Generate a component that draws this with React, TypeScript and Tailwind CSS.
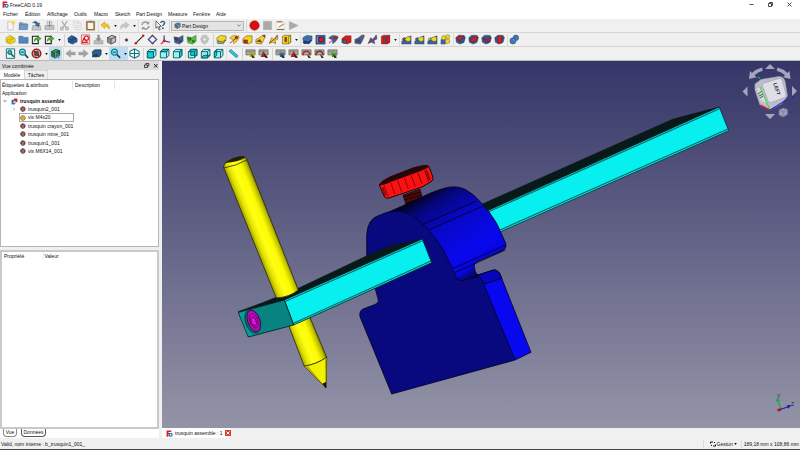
import React from "react";

type Glyph = { k: string; a?: string; b?: string };

const BLUE = "#3465a4";
const NAVY = "#1d3f73";
const YEL = "#f0d818";
const RED = "#dc1a1a";
const TEAL = "#18b8c0";

function Cube({ a, b, c }: { a: string; b: string; c: string }) {
  return (
    <g stroke="#222" strokeWidth=".5" strokeLinejoin="round">
      <path d="M1.5 4 6.5 1.5 10.5 3v5.5L5.5 11 1.5 9z" fill={b} />
      <path d="M1.5 4 6.5 1.5 10.5 3 5.7 5.5z" fill={a} />
      <path d="M5.7 5.5 10.5 3v5.5L5.6 11z" fill={c} />
    </g>
  );
}

function Drawing({ k, a = BLUE, b = NAVY }: Glyph) {
  switch (k) {
    case "new":
      return <g><path d="M3 2h6v9H3z" fill="#f4f4f4" stroke="#aaa" strokeWidth=".6" /><circle cx="9" cy="3" r="2.2" fill="#f3dc4a" /></g>;
    case "open":
      return <g><path d="M1 2.500h4l1 1h4v6H1z" fill="#8a939c" /><path d="M2.200 5H11l-.8 5.500H1z" fill="#6b9bd0" stroke="#48719f" strokeWidth=".5" /></g>;
    case "save":
      return <g><path d="M2 6h8l1 5H1z" fill="#c3c8cc" stroke="#777" strokeWidth=".5" /><path d="M1.500 3Q5-.5 8 3.500l1.500-.5L8.500 7.500 4.500 5.500 6 4.700Q4 2.500 1.500 3z" fill={a} stroke="#345" strokeWidth=".3" /></g>;
    case "print":
      return <g><path d="M3.500 1.500h5V6h-5z" fill="#ddd" stroke="#999" strokeWidth=".6" /><path d="M1 6h10v4.500H1z" fill="#c0c0c0" stroke="#8c8c8c" strokeWidth=".5" /><path d="M6 2v5M4.500 5.500 6 7l1.500-1.500" stroke="#888" fill="none" /></g>;
    case "cut":
      return <g fill="none" stroke="#aaa" strokeWidth="1.200"><path d="M3 1l4.500 7M9 1 4.500 8" /><circle cx="3.200" cy="9.300" r="1.500" /><circle cx="8.800" cy="9.300" r="1.500" /></g>;
    case "copy":
      return <g fill="#f2f2f2" stroke="#c5c5c5" strokeWidth=".6"><path d="M2 1.500h5.500v7H2z" /><path d="M4.500 3.500H10v7H4.500z" /><path d="M5.500 6H9M5.500 8H9" /></g>;
    case "paste":
      return <g><path d="M1.500 1.500h9V11h-9z" fill="#a77b35" stroke="#6b4b18" strokeWidth=".5" /><path d="M3 3h6v6.800H3z" fill="#f5f5f5" /><path d="M4.300.8h3.400v2H4.300z" fill="#888" /></g>;
    case "undo":
      return <path d="M1 5.500 5 2v2c3.500 0 6 1.600 5 6-.8-2-2.500-3-5-2.800v2z" fill={a} stroke={b} strokeWidth=".5" />;
    case "redo":
      return <path d="M11 5.500 7 2v2C3.500 4 1 5.600 2 10c.8-2 2.500-3 5-2.800v2z" fill="#c6c6c6" stroke="#a5a5a5" strokeWidth=".4" />;
    case "refresh":
      return <g fill="none" stroke="#999" strokeWidth="1.600"><path d="M2 5.500A4 4 0 0 1 9 3.500M10 6.500A4 4 0 0 1 3 8.500" /><path d="M10 1v3.500H6.500zM2 11V7.500h3.500z" fill="#999" stroke="none" /></g>;
    case "help":
      return <g><path d="M1 1v8l2-1.700L4.500 11l1.200-.6L4.400 7H7z" fill="#f6f6f6" stroke="#222" strokeWidth=".7" /><path d="M6.300 3.300C6.500.8 10.800 1 10.500 3.500c-.2 1.300-1.900 1.500-1.900 3" fill="none" stroke="#36597c" strokeWidth="1.500" /><circle cx="8.600" cy="9" r="1" fill="#36597c" /></g>;
    case "rec":
      return <circle cx="6" cy="6" r="5.200" fill="#d90f0f" stroke="#a80808" strokeWidth=".5" />;
    case "stop":
      return <path d="M1.500 1.500h9v9h-9z" fill="#aaa" stroke="#999" strokeWidth=".4" />;
    case "macro":
      return <g><path d="M1.500 2h9v8.500h-9z" fill="#f8f8f3" stroke="#c9c9c9" strokeWidth=".5" /><path d="M2 2h6M2 10.300h8" stroke="#555" /><path d="M4 8 10 4" stroke="#d49a28" strokeWidth="1.400" /></g>;
    case "play":
      return <path d="M1.500 1.500 11 6l-9.500 4.500z" fill="#aaa" stroke="#999" strokeWidth=".4" />;
    case "cube":
      return <Cube a={a} b={b} c={a} />;
    case "part":
      return <g stroke={b} strokeWidth=".6" fill={a}><path d="M1 4.500 5 1.500l3 1.500 3 2v3.500l-5 2.500-4.500-2z" /><circle cx="4" cy="7.500" r="1.700" /><circle cx="7.500" cy="4.800" r="1.500" /></g>;
    case "folder":
      return <path d="M1 2.500h4.200l1 1.200H11V10H1z" fill="#5187c2" stroke="#37618f" strokeWidth=".6" />;
    case "link":
      return <g><path d="M1.500 2.500h6.500v8H1.500z" fill="#f0f0f0" stroke="#222" strokeWidth="1.100" /><path d="M3.500 8C3.500 5 5 4 7 4V2l4 3-4 3V6C5.500 6 5 6.500 3.500 8z" fill="#4db62a" stroke="#1c6214" strokeWidth=".5" /></g>;
    case "sketch":
      return <g><path d="M1.500 1h9v10h-9z" fill="#f7e3e3" stroke="#d04a4a" strokeWidth=".8" /><circle cx="7" cy="4.500" r="2.300" fill="none" stroke={RED} strokeWidth="1.200" /><path d="M2.500 9.500 4 5l4 4z" fill="none" stroke={RED} strokeWidth="1.200" /></g>;
    case "attach":
      return <g fill="#bbb" stroke="#8a8a8a" strokeWidth=".4"><path d="M1 7h10v4H1z" /><path d="M5 1h2v4h2L6 8 3 5h2z" fill="#888" /></g>;
    case "dot":
      return <circle cx="6" cy="6.500" r="1.400" fill="#c02030" stroke="#2a3c8c" strokeWidth=".8" />;
    case "line":
      return <g><path d="M2 10 10 2" stroke="#222" strokeWidth="1.100" /><circle cx="2" cy="10" r="1.400" fill={RED} /><circle cx="10" cy="2" r="1.400" fill={RED} /></g>;
    case "plane":
      return <g><path d="M6 1.500 10.500 6 6 10.500 1.500 6z" fill="#eef1fa" stroke="#27458a" strokeWidth="1.300" /><circle cx="6" cy="1.800" r="1" fill={RED} /><circle cx="6" cy="10.300" r="1" fill={RED} /></g>;
    case "axes":
      return <g strokeWidth="1.300"><path d="M4.500 7.500V1.500" stroke="#27458a" /><path d="M4.500 7.500 1 11" stroke={RED} /><path d="M4.500 7.500 11 9" stroke="#27458a" /><circle cx="4.500" cy="7.500" r="1.500" fill={RED} /></g>;
    case "bind":
      return <g stroke="#222" strokeWidth=".4"><path d="M1 3 6 4l5-2.500V8L7 11 2 9.500z" fill={a} /><circle cx="4" cy="5.500" r="1.700" fill={b} /><circle cx="8" cy="8" r="1.200" fill={b} /></g>;
    case "clone":
      return <g stroke="#9a9a9a" strokeWidth=".6" fill="#ccc"><path d="M2 5 4 1.500h4L10.500 5 9 9l-3 2-3-2z" /><circle cx="6" cy="6" r="2" fill="#eee" /></g>;
    case "pad":
      return <g stroke="#333" strokeWidth=".5"><path d="M1 8.500 4 6.500h7L8 10.500H2z" fill={b} /><path d="M1 4 5 1.500l6 .8V6L7 8.500 1 7z" fill={a} /></g>;
    case "revolve":
      return <g stroke="#333" strokeWidth=".4"><path d="M.8 4.500C3 .8 9 .8 11.200 4L8 8.500 5 10.500V6.500z" fill={a} /><path d="M1 10 11 2" stroke={b} strokeWidth="1" /><circle cx="8" cy="4" r="1.500" fill={b} /></g>;
    case "loft":
      return <g stroke="#333" strokeWidth=".5"><path d="M1 5 5 2h6v7L7 10.800 1 9.500z" fill={a} /><path d="M2 6.500h4V10H2z" fill={b} /></g>;
    case "sweep":
      return <g stroke="#333" strokeWidth=".5"><path d="M1 6 5 4 8 1.500 10.500 4 9 7.500 7 11 1 10z" fill={a} /><path d="M2 8 5.500 6 7 9z" fill={b} /><path d="M8 1.500 11 1v3" fill={b} /></g>;
    case "helix":
      return <g><path d="M1.500 10 4 4 6.500 6 10 1l.8 4.500L7.500 7l1 3.500L5 9z" fill={a} stroke="#333" strokeWidth=".5" /><path d="M1 10.500 11 2" stroke={b} strokeWidth=".9" /></g>;
    case "prim":
      return <g stroke="#333" strokeWidth=".5"><path d="M1.500 2.500 4 1.300h6.500V9L8 10.800H1.500z" fill={a} /><path d="M8 2.800 10.500 1.500V9L8 10.500z" fill={a} /><path d="M4.200 3.500h1.800v5H4.200z" fill={b} /></g>;
    case "hole":
      return <g><path d="M1 1.500h10V11H1z" fill="#2d5c9f" stroke="#172e5b" strokeWidth=".6" /><circle cx="6.500" cy="6" r="2.800" fill={RED} stroke="#300" strokeWidth=".5" /><path d="M2.500 2.500v7" stroke="#7ba4d8" /></g>;
    case "pattern":
      return <g stroke="#333" strokeWidth=".4"><path d="M.8 8 4 5l7-3v9H.8z" fill={BLUE} /><path d="M4 6 6.500 3.200h4V7L7.500 8.500z" fill={YEL} /><path d="M1 5.500 4 3.500v3.500z" fill={a} /></g>;
    case "multi":
      return <g stroke="#444" strokeWidth=".4"><path d="M1 6h5v5H1z" fill={BLUE} /><circle cx="4" cy="4" r="2.300" fill={YEL} /><circle cx="8.500" cy="3" r="2.300" fill={YEL} /><circle cx="8.300" cy="8" r="2.500" fill={YEL} /></g>;
    case "fillet":
      return <g stroke="#222" strokeWidth=".4"><path d="M.8 4 4 1.300l6 .2L11.300 4l-1.500 5.200L5.500 11 1.500 9z" fill="#2b5797" /><path d={a === "1" ? "M2 4.500 5 2l5 1L6 6v3z" : a === "2" ? "M2 7 7 2l4 2-5 5z" : a === "3" ? "M2 4.500 6 6l4-2v4L7 7v2.500L5 8z" : "M4 2.500 8.500 2v7.500L4 10z"} fill={RED} /></g>;
    case "bool":
      return <g fill="#4178b8" stroke="#1d416f" strokeWidth=".6"><circle cx="7.500" cy="4.200" r="3" /><circle cx="4.300" cy="7.500" r="3.300" /><path d="M4.500 5.500 7 7.500" stroke="#9dc1e8" /></g>;
    case "fitall":
      return <g><path d="M1.500 1h9v10.300h-9z" fill="#eaf6f4" stroke="#126a6a" strokeWidth="1" /><circle cx="5.200" cy="4.800" r="2.300" fill={TEAL} stroke="#0c4a50" strokeWidth=".8" /><path d="M6.800 6.500 9.500 9.500" stroke="#0c4a50" strokeWidth="1.500" /></g>;
    case "zoom":
      return <g><path d="M7 6.500 10.500 10.200" stroke="#145" strokeWidth="1.800" strokeLinecap="round" /><circle cx="4.800" cy="4.500" r="3.200" fill="#8fe4e8" stroke="#0c8590" strokeWidth="1.400" /><path d="M3 4.500h3.600" stroke="#137" /></g>;
    case "nodraw":
      return <g><path d="M3 4 6.500 2.500 9 4v4L5.500 9.500 3 8z" fill="#286b71" /><circle cx="6" cy="6" r="4.600" fill="none" stroke="#b41414" strokeWidth="1.700" /><path d="M3 3l6 6" stroke="#b41414" strokeWidth="1.500" /></g>;
    case "bbox":
      return <g><Cube a="#2ca04a" b="#167c36" c="#21663b" /><path d="m6 5 5 4-2 .2L10.200 11 9 11.500 8 9.500l-2 1z" fill="#315b93" stroke="#dfefff" strokeWidth=".4" /></g>;
    case "back":
      return <path d="M.8 6 6 1.800v2.700h5.200v3H6v2.700z" fill="#a2a2a2" stroke="#888" strokeWidth=".4" />;
    case "fwd":
      return <path d="M11.200 6 6 1.800v2.700H.8v3H6v2.700z" fill="#a2a2a2" stroke="#888" strokeWidth=".4" />;
    case "linkcube":
      return <g><path d="M1.500 4 4 2h7v5L9 9.500H2z" fill="#2b6293" stroke="#123" strokeWidth=".7" /><path d="M1 10.500C1 8 3 7 5 7V5.500L8 8l-3 2.500V9C3 9 2 9.500 1 10.500z" fill="#173d68" /></g>;
    case "iso":
      return <g fill="#e8fbfb" stroke="#127079" strokeWidth="1.100"><path d="M6 1 11 3.500v5L6 11 1 8.500v-5z" /><path d="M1 6h10M6 1v10" /></g>;
    case "face":
      return <g stroke="#085f68" strokeWidth="1" strokeLinejoin="round"><path d="M1.500 4 4 1.500h6.800V8L8.200 10.800H1.500z" fill="#9df1f3" /><path d={a === "1" ? "M1.500 4h6.700v6.800H1.500z" : a === "2" ? "M1.500 4 4 1.500h6.800L8.200 4z" : a === "3" ? "M8.200 4 10.800 1.500V8L8.200 10.800z" : a === "4" ? "M4 1.500h6.800V8H4z" : a === "5" ? "M1.500 10.800 4 8h6.800l-2.600 2.800z" : "M1.500 4 4 1.500V8l-2.500 2.800z"} fill="#12cdd6" /><path d="M1.500 4h6.700v6.800M8.200 4l2.600-2.500" fill="none" /></g>;
    case "ruler":
      return <path d="M1 3.500 3 1.500l8 7L9 10.500z" fill="#27cbd6" stroke="#0b6f7a" strokeWidth=".7" />;
    case "meas":
      return <g><path d="M1 2h10v5.500H1z" fill="#a9ab9c" stroke="#555" strokeWidth=".7" /><path d="M2 4h7" stroke="#333" strokeWidth=".6" strokeDasharray="1 .7" /><path d={b === "1" ? "M4 9 6 5l3 4z" : b === "2" ? "M2 8C3 2 9 2 10 8" : "M5.500 6h4v3H6z"} fill={b === "2" ? "none" : a} stroke={a} strokeWidth="1.400" /><path d="m6.500 6.500 4.500 4-3 .5z" fill="#222" /></g>;
    case "logo":
      return <g><path d="M1 1h8v2.500H4.200V5H7v2H4.200v4.500H1z" fill="#d42026" /><circle cx="8" cy="8" r="2.500" fill="#fff" stroke="#2563a8" strokeWidth="2" /></g>;
    default:
      return null;
  }
}

function Icon({ size = "size-[11px]", ...g }: Glyph & { size?: string }) {
  return <svg viewBox="0 0 12 12" className={`${size} shrink-0`} aria-hidden="true"><Drawing {...g} /></svg>;
}

// [label, kind, colour a, colour b]; "|" narrow separator, "||" wide separator, "v" drop-down arrow
type Item = string | [string, string, string?, string?];

function Tool({ item }: { item: Item }) {
  if (item === "|") return <span className="flex h-3 w-0.5 shrink-0 justify-center"><i className="w-px bg-[#dcdcdc]" /></span>;
  if (item === "||") return <span className="flex h-3 w-1 shrink-0 justify-center"><i className="w-px bg-[#d4d4d4]" /></span>;
  if (item === "v" || item === "V")
    return (
      <button aria-label="Plus d'options" className={`flex h-[13px] w-1.5 shrink-0 items-center justify-center ${item === "V" ? "bg-[#bcdcf4]" : ""}`}>
        <svg viewBox="0 0 4 3" className="h-[2px] w-[3px]"><path d="M0 0h4L2 3z" fill="#111" /></svg>
      </button>
    );
  const [label, k, a, b] = item as [string, string, string?, string?];
  const on = k === "bbox" || label === "Zoom lié";
  return (
    <button aria-label={label} title={label} className={`flex h-[13px] w-[13px] shrink-0 items-center justify-center ${on ? "bg-[#bcdcf4]" : ""}`}>
      <Icon k={k} a={a} b={b} />
    </button>
  );
}

const fileTools: Item[] = [
  ["Nouveau", "new"], ["Ouvrir", "open"], ["Enregistrer", "save"], ["Imprimer", "print"], "|",
  ["Couper", "cut"], ["Copier", "copy"], ["Coller", "paste"], "|",
  ["Annuler", "undo", "#f1c71d", "#b38d08"], "v", ["Rétablir", "redo"], "v", "|",
  ["Rafraîchir", "refresh"], "|", ["Qu'est-ce que c'est ?", "help"], "||",
];
const macroTools: Item[] = [["Enregistrer la macro", "rec"], ["Arrêter", "stop"], ["Macros", "macro"], ["Exécuter", "play"]];
const partTools: Item[] = [
  ["Créer une pièce", "part", YEL, "#a48a08"], ["Créer un groupe", "folder"], ["Créer un lien", "link"], ["Actions de lien", "link"], "v", "||",
  ["Créer un corps", "part", "#2b5c9c", "#12305c"], ["Créer une esquisse", "sketch"], ["Attacher l'esquisse", "attach"], ["Valider l'esquisse", "cube", "#bbb", "#8b8b8b"], "|",
  ["Point", "dot"], ["Ligne", "line"], ["Plan", "plane"], ["Repère local", "axes"], ["Forme liée", "bind", BLUE, "#7c3150"], ["Sous-forme liée", "bind", "#4fc936", "#2b8c18"], ["Clone", "clone"], "||",
  ["Protrusion", "pad", YEL, "#9d9f88"], ["Révolution", "revolve", YEL, RED], ["Lissage additif", "loft", YEL, RED], ["Balayage additif", "sweep", YEL, RED], ["Hélice additive", "helix", YEL, RED], ["Primitive additive", "prim", YEL, RED], "v", "|",
  ["Cavité", "pad", "#3b6fb4", "#173b76"], ["Perçage", "hole"], ["Rainure", "revolve", BLUE, RED], ["Lissage soustractif", "loft", RED, BLUE], ["Balayage soustractif", "sweep", BLUE, RED], ["Hélice soustractive", "helix", BLUE, RED], ["Primitive soustractive", "prim", RED, BLUE], "v", "|",
  ["Symétrie", "pattern", RED], ["Répétition linéaire", "pattern", BLUE], ["Répétition circulaire", "pattern", YEL], ["Transformation multiple", "multi"], "|",
  ["Congé", "fillet", "1"], ["Chanfrein", "fillet", "2"], ["Dépouille", "fillet", "3"], ["Coque", "fillet", "4"], "|",
  ["Opération booléenne", "bool"],
];
const viewTools: Item[] = [
  ["Tout afficher", "fitall"], ["Afficher la sélection", "zoom"], ["Style de représentation", "nodraw"], "v", ["Boîte englobante", "bbox"], "|",
  ["Précédent", "back"], ["Suivant", "fwd"], ["Aller à l'objet lié", "linkcube"], "v",
  ["Zoom lié", "zoom"], "V", ["Isométrique", "iso"], "||",
  ["Face", "face", "1"], ["Dessus", "face", "2"], ["Droite", "face", "3"], "|",
  ["Arrière", "face", "4"], ["Dessous", "face", "5"], ["Gauche", "face", "6"], "|", ["Mesurer une distance", "ruler"], "||",
  ["Mesure linéaire", "meas", "#b4a915", "0"], ["Mesure angulaire", "meas", "#a52525", "1"], "||",
  ["Actualiser", "meas", "#3565a0", "0"], ["Effacer", "meas", "#b81c28", "1"], ["Tout basculer", "meas", "#b81c28", "2"], ["Basculer 3D", "meas", "#8f2020", "2"], ["Basculer delta", "meas", "#4c9b20", "0"],
];

const menus: [string, string][] = [
  ["Fichier", "w-[22px]"], ["Édition", "w-[22px]"], ["Affichage", "w-[27px]"], ["Outils", "w-[20px]"], ["Macro", "w-[21px]"],
  ["Sketch", "w-[21px]"], ["Part Design", "w-[32px]"], ["Measure", "w-[25px]"], ["Fenêtre", "w-[23px]"], ["Aide", "w-[16px]"],
];

const parts = ["trusquin2_001", "vis M4x20", "trusquin crayon_001", "trusquin mine_001", "trusquin1_001", "vis M6X14_001"];

function PartDot({ color }: { color: string }) {
  return (
    <svg viewBox="0 0 12 12" className="size-[6px] shrink-0">
      <path d="M1 4 4 1l5 1 2 4-2 4-4 1.500L1 8z" fill={color} stroke="#3a2020" strokeWidth=".7" />
      <path d="M3 4l3 2 3-2M6 6v4" stroke="#c8b9b9" fill="none" />
    </svg>
  );
}

function Scene() {
  const flutes = [0, 1, 2, 3, 4, 5, 6];
  return (
    <svg viewBox="162 61 638 367" preserveAspectRatio="xMidYMid slice" className="block h-full w-full" role="img" aria-label="Vue 3D du trusquin assemblé">
      <defs>
        <linearGradient id="sky" x1="0" y1="0" x2="0" y2="1"><stop offset="0" stopColor="#353568" /><stop offset="1" stopColor="#9494a8" /></linearGradient>
        <linearGradient id="pencil" gradientUnits="userSpaceOnUse" x1="251.700" y1="237" x2="274" y2="228">
          <stop offset="0" stopColor="#a0a000" /><stop offset=".18" stopColor="#e2e200" /><stop offset=".4" stopColor="#ffff14" /><stop offset=".7" stopColor="#fbfb00" /><stop offset=".9" stopColor="#c4c400" /><stop offset="1" stopColor="#8a8a00" />
        </linearGradient>
        <linearGradient id="round" gradientUnits="userSpaceOnUse" x1="425" y1="195" x2="475" y2="275">
          <stop offset="0" stopColor="#02022c" /><stop offset=".12" stopColor="#06067a" /><stop offset=".4" stopColor="#0808c8" /><stop offset=".75" stopColor="#0808ee" /><stop offset=".9" stopColor="#0606e0" /><stop offset="1" stopColor="#040460" />
        </linearGradient>
      </defs>
      <rect x="162" y="61" width="638" height="367" fill="url(#sky)" />

      <g stroke="#041a1c" strokeWidth=".7" strokeLinejoin="round">
        <path d="M478 206 673.300 119l46-12L487 211z" fill="#071919" />
        <path d="M487 211 719.300 107l9.400 23.700L500 232z" fill="#08efef" />
        <path d="M487 212.500 720 108.600M500 230l228-101" stroke="#0a6667" strokeWidth="1.100" />
      </g>

      <g strokeLinejoin="round">
        <path d="M403 195 420 189l3 11-17 5z" fill="#4d0808" stroke="#1b0303" strokeWidth=".6" />
        <path d="m403 197 18-5m-17 8 18-5m-16 8 17-5" stroke="#160303" strokeWidth=".9" />
        <path d="M379.300 185Q380 182 390 177L413 168Q427 164 429 166.500L432.500 176Q434 179 432 181L422 187 389 198Q386 199 384.500 197z" fill="#fa1212" stroke="#240303" />
        <path d="M379.300 185Q380 182 390 177L413 168Q427 164 429 166.500 428 168.500 414 173.500L392 181.500Q380 186.500 379.300 185z" fill="#2a0505" />
        {flutes.map((i) => (
          <path key={i} d={`M${384 + i * 6.8} ${185.500 - i * 2.500}l4 11`} stroke={i > 4 ? "#5a0505" : "#7c0505"} strokeWidth=".9" />
        ))}
        <path d="M426 170l4 10M382.500 187.500l3 8" stroke="#8b0a0a" strokeWidth="1.800" />
      </g>

      <g stroke="#03031c" strokeWidth=".8" strokeLinejoin="round">
        <path d="M375 218 403 205.700 430 193.300Q446 187 451 187 459 186 465 189.300 474 194 481.700 203.300 490 212 496.700 223.300L505.700 243.300Q507 248 503 250.500L478.300 261Q473 264 474.500 268 475 274 480 276L461.700 281 440 275 400 225z" fill="url(#round)" />
        <path d="M476 275.500 493.300 270Q499 269 501.700 278.300L531 352.300 515 360 478 290z" fill="#0808f0" />
        <path d="M476.700 275.500 493.300 270Q499 269 501.700 278.300L485 284z" fill="#0606b8" />
        <path d="M366.700 256V236Q367 219 379 215.500 391 210 400 211.300 407 212 413.300 216.700 423 223 430 231.700 438 241 443.300 250L451.700 266.700 456 277.300Q458 281 462 281L478.300 276.700Q481 277 483.300 283.300L515 360 391.700 394 360 316.700Q359 311 363 309L375 304.500Q379 303 378.300 300L373 280z" fill="#09097f" />
        <path d="m422.700 224.300 54-23.300m-48.400 29 55-24M453.300 268.300l52-23.300M455 272.500l50.500-22.500" fill="none" />
      </g>

      <g strokeLinejoin="round">
        <path d="M285 316 309 315 326.700 357.300Q317 364 304.300 366.300z" fill="url(#pencil)" stroke="#282800" strokeWidth=".8" />
        <path d="M304.300 366.300Q317 364 326.700 357.300L326 388z" fill="#f2f200" stroke="#282800" strokeWidth=".8" />
        <path d="M304.800 366.500 308 366l17 20.500z" fill="#b4b400" />
        <path d="m325 359 1.500-1-.5 28z" fill="#a0a000" />
        <path d="m322.500 383.500 3.800-1.500-.3 6.500z" fill="#111" />
        <path d="M238.300 311.700 262 303 298 288.500 365 256.700 390 246 422.300 239 285 300z" fill="#071919" stroke="#041a1c" strokeWidth=".7" />
        <path d="m284.300 300 138-61 9.400 23.700-138 62.300z" fill="#08efef" stroke="#041a1c" strokeWidth=".8" />
        <path d="M285 301.500 423 240.500M293 323.500l138-62.500" stroke="#0a6667" strokeWidth="1.100" />
        <path d="m238.300 312.500 46-12.500 9.400 25-45.400 12z" fill="#078382" stroke="#041a1c" strokeWidth=".8" />
        <path d="m239 313 7-2q-6 12 7 24l-4.500 1.300z" fill="#0a9c9c" />
        <g transform="rotate(-20 253.300 321)" fill="none">
          <ellipse cx="252.800" cy="321" rx="7.200" ry="12" fill="#067070" stroke="#043434" strokeWidth=".7" />
          <ellipse cx="253.800" cy="321" rx="6" ry="11" fill="#c008c0" stroke="#3c063c" strokeWidth=".8" />
          <ellipse cx="253.800" cy="321" rx="4" ry="7.500" stroke="#4a054a" strokeWidth=".7" />
          <ellipse cx="253.500" cy="321.500" rx="2.500" ry="4.500" fill="#e310e3" stroke="#3c063c" strokeWidth=".8" />
        </g>
        <path d="M223.500 167Q224 162 235 158 245 155 246.700 159L298.300 290Q290 297 276.300 298z" fill="url(#pencil)" stroke="#282800" strokeWidth=".8" />
        <path d="M225 163Q228 160 235 157.500 243 155 245.500 157.500 238 162 225 163z" fill="#222200" />
        <path d="M223.500 168Q236 166 246.700 160" fill="none" stroke="#282800" strokeWidth=".8" />
      </g>

      <g fill="#a5a5bf">
        <path d="m770 64 5 5h-10zM770 119l5-5h-10zM742.500 91.500l5-5v10zM797 91l-5-5v10z" />
        <path d="M749 79l1-8 2 2q4-4 10-5.500l.8 3.200q-5 1.300-8.300 4.500l2 2zM790.500 79l-1-8-2 2q-4-4-10-5.500l-.8 3.200q5 1.300 8.300 4.500l-2 2z" />
      </g>
      <g strokeLinejoin="round">
        <path d="M755 84 761 79.500 779 76.500Q783 76 785 81L787.500 96 782 103.500 770 110 760 105 755 90z" fill="#bcbccd" stroke="#9c9cb2" strokeWidth=".6" />
        <path d="M764 83 779 78.500Q781 78 782 80L786 94Q786.500 97 784 98L771 102.500Q769 103 768 101L762.500 86Q762 84 764 83z" fill="#dedee6" stroke="#9999ae" strokeWidth=".6" />
        <path d="M756.500 88 761 88 767 103 761 101z" fill="#d6d6e0" />
        <text transform="translate(773 86) rotate(72)" x="4" y="-1" fontSize="5" fontWeight="700" fill="#222" textAnchor="middle" className="font-['Liberation_Sans',sans-serif]">LEFT</text>
        <path d="m758 94 4-3m-3 5 4-2m-3 4 3-2" stroke="#444" strokeWidth=".9" />
        <path d="m760 87 10 23" stroke="#22e822" strokeWidth="1" />
        <path d="m760.500 105 9.500 5" stroke="#e01c1c" strokeWidth="1.200" />
        <path d="m770 110 16-10M792 97.500l2-1.300" stroke="#1515e0" strokeWidth="1" />
        <path d="m758 77 2 1.500" stroke="#19b030" strokeWidth="1.500" />
        <path d="m779 110 4-2 4.500 1.500v5L783 117l-4-2z" fill="#9b9bb4" stroke="#75758f" strokeWidth=".5" />
        <path d="m779 110 4 2v5m0-5 4.500-2.500" fill="none" stroke="#75758f" strokeWidth=".5" />
        <path d="M790 111.500h4l-2 2z" fill="#38385f" />
      </g>

      <g strokeWidth="1.200">
        <path d="m781 409.300-3-8" stroke="#24a548" /><path d="m776 402 1-4.500 3.500 3z" fill="#24a548" />
        <path d="m781 409.300 7-2.500" stroke="#1b1bac" /><path d="m787 405 4.500.3-3.500 3.500z" fill="#1b1bac" />
        <path d="m777.500 410.500 3.500-1.200" stroke="#a41c1c" strokeWidth="2.500" />
        <g fontSize="5" fill="#20202c" stroke="none" className="font-['Liberation_Sans',sans-serif]"><text x="777" y="398">Y</text><text x="791" y="406">Z</text></g>
      </g>
    </svg>
  );
}

export default function App() {
  return (
    <div className="flex h-screen w-full flex-col overflow-hidden border-b border-[#4a4a4a] bg-[#f0f0f0] font-['Liberation_Sans','Noto_Sans',sans-serif] text-[5px] leading-[8px] text-[#111]">
      <header className="shrink-0 bg-white">
        <div className="flex h-[9px] items-center pl-0.5">
          <Icon k="logo" size="size-[7px]" />
          <span className="ml-px">FreeCAD 0.19</span>
          <div className="ml-auto flex gap-3 pr-[7px]">
            <button aria-label="Réduire" className="flex size-[7px] items-center justify-center"><svg viewBox="0 0 7 7" className="size-[7px]"><path d="M1.500 3.500h4" stroke="#222" strokeWidth=".8" /></svg></button>
            <button aria-label="Restaurer"><svg viewBox="0 0 7 7" className="size-[7px]"><path d="M1.500 2.500h3v3h-3zM2.500 2.500v-1h3v3h-1" fill="none" stroke="#222" strokeWidth=".8" /></svg></button>
            <button aria-label="Fermer"><svg viewBox="0 0 7 7" className="size-[7px]"><path d="m1.500 1.500 4 4m0-4-4 4" stroke="#222" strokeWidth=".8" /></svg></button>
          </div>
        </div>
        <nav className="flex h-[10px] items-center pl-[3px]">
          {menus.map(([m, w]) => <button key={m} className={`${w} shrink-0 whitespace-nowrap text-left`}>{m}</button>)}
        </nav>
      </header>

      <div className="flex h-[14px] shrink-0 items-center border-b border-[#d5d5d5] pl-1" role="toolbar" aria-label="Fichier">
        {fileTools.map((t, i) => <Tool key={i} item={t} />)}
        <div className="relative flex h-[10px] w-[73px] shrink-0 items-center border border-[#b5b5b5] bg-[#e3e3e3] pl-0.5">
          <Icon k="cube" a="#7398c5" b="#5c7698" size="size-[7px]" />
          <select aria-label="Atelier" defaultValue="pd" className="h-2 w-full appearance-none bg-transparent pl-px text-[5px] leading-[8px] outline-none"><option value="pd">Part Design</option></select>
          <svg viewBox="0 0 6 4" className="pointer-events-none absolute right-0.5 h-[3px] w-[4px]"><path d="m.5.5 2.500 2.500L5.500.5" stroke="#555" fill="none" /></svg>
        </div>
        <Tool item="||" />
        {macroTools.map((t, i) => <Tool key={i} item={t} />)}
      </div>
      <div className="flex h-[14px] shrink-0 items-center border-b border-[#d5d5d5] pl-1" role="toolbar" aria-label="Conception de pièces">
        {partTools.map((t, i) => <Tool key={i} item={t} />)}
      </div>
      <div className="flex h-[14px] shrink-0 items-center border-b border-[#b9b9b9] pl-1" role="toolbar" aria-label="Vue">
        {viewTools.map((t, i) => <Tool key={i} item={t} />)}
      </div>

      <main className="flex min-h-0 flex-1">
        <aside className="flex w-[159px] shrink-0 flex-col">
          <div className="flex h-[9px] shrink-0 items-center bg-[#dcdcdc] pl-0.5">
            <h2>Vue combinée</h2>
            <button aria-label="Détacher" className="ml-auto mr-0.5"><svg viewBox="0 0 7 7" className="size-[7px]"><path d="M1.500 3h3v2.500h-3zM2.800 3V1.500h3V4H4.500" fill="none" stroke="#222" strokeWidth=".8" /></svg></button>
            <button aria-label="Fermer le panneau"><svg viewBox="0 0 7 7" className="size-[7px]"><path d="m2 2 3.500 3.500m0-3.500L2 5.500" stroke="#222" /></svg></button>
          </div>
          <div className="flex h-[9px] shrink-0" role="tablist">
            <button role="tab" aria-selected="true" className="w-[25px] border-r border-[#d4d4d4] bg-white">Modèle</button>
            <button role="tab" aria-selected="false" className="w-[23px] border-r border-t border-[#d9d9d9]">Tâches</button>
          </div>
          <section className="min-h-0 flex-[168] border border-[#b5b5b5] bg-white">
            <div className="flex h-[10px] items-center"><span className="w-[72px] border-r border-[#e2e2e2] pl-px">Étiquettes &amp; attributs</span><span className="w-[42px] border-r border-[#e2e2e2] pl-0.5">Description</span></div>
            <div className="h-[7px] pl-px leading-[7px]">Application</div>
            <ul className="grid h-[58px] auto-rows-fr">
              <li className="flex items-center pl-0.5 font-bold">
                <svg viewBox="0 0 6 6" className="mr-1 size-1"><path d="m1 2 2 2 2-2" fill="none" stroke="#333" strokeWidth="1.200" /></svg>
                <svg viewBox="0 0 12 12" className="mr-0.5 size-[7px]"><path d="M1 3h6v8H1z" fill="#3465a4" /><path d="M5 1h6v6H5z" fill="#d42222" /><path d="M4 5h4v4H4z" fill="#e9eef5" stroke="#567" strokeWidth=".6" /></svg>
                trusquin assemble
              </li>
              {parts.map((p, i) => (
                <li key={p} className="flex items-center pl-[11px]">
                  <span className="flex w-[7px] shrink-0">{i === 0 && <svg viewBox="0 0 6 6" className="size-1"><path d="m2 1 2 2-2 2" fill="none" stroke="#888" /></svg>}</span>
                  {i === 1 ? (
                    <label className="flex h-[9px] w-[55px] items-center border border-[#a9a9a9] bg-white">
                      <PartDot color="#d9a61b" />
                      <input aria-label="Nom de l'objet" defaultValue={p} className="ml-0.5 h-[7px] w-[44px] bg-transparent leading-[7px] outline-none" />
                    </label>
                  ) : (
                    <><span className="ml-px mr-0.5 flex"><PartDot color="#74484d" /></span>{p}</>
                  )}
                </li>
              ))}
            </ul>
          </section>
          <section className="mt-[3px] min-h-0 flex-[178] border-2 border-[#c9c9c9] bg-white">
            <table className="w-full text-left"><thead><tr><th className="w-[41px] pl-0.5 font-normal">Propriété</th><th className="border-l border-[#eee] pl-px font-normal">Valeur</th></tr></thead></table>
          </section>
          <div className="flex h-[9px] shrink-0 bg-white" role="tablist">
            <button role="tab" aria-selected="false" className="ml-[3px] h-2 w-[14px] rounded-b border border-t-0 border-[#888] leading-[7px]">Vue</button>
            <button role="tab" aria-selected="true" className="ml-1 h-2 w-[25px] rounded-b border border-t-0 border-[#555] leading-[7px]">Données</button>
          </div>
        </aside>
        <div className="ml-[3px] flex min-w-0 flex-1 flex-col">
          <div className="min-h-0 flex-1"><Scene /></div>
          <div className="flex h-[10px] shrink-0">
            <div className="flex w-[68px] items-center bg-white pl-1"><Icon k="logo" size="size-[7px]" /><span className="ml-0.5 whitespace-nowrap">trusquin assemble : 1</span>
              <button aria-label="Fermer l'onglet" className="ml-0.5 flex size-[6px] shrink-0 items-center justify-center bg-[#dd3a30]"><svg viewBox="0 0 6 6" className="size-[6px]"><path d="m1.500 1.500 3 3m0-3-3 3" stroke="#fff" /></svg></button>
            </div>
          </div>
        </div>
      </main>

      <footer className="flex h-[11px] shrink-0 items-center pl-px">
        <span>Valid, nom interne : b_trusquin1_001_</span>
        <button className="ml-auto flex items-center border-l border-[#ddd] pl-1.5">
          <svg viewBox="0 0 12 12" className="mr-px size-[6px]"><path d="M1 5V2h5M11 7v3H6M2 8l2 2M10 4 8 2" fill="none" stroke="#111" strokeWidth="2" /></svg>Gestun
          <svg viewBox="0 0 4 3" className="ml-px h-[2px] w-[3px]"><path d="M0 0h4L2 3z" fill="#111" /></svg>
        </button>
        <span className="ml-1 border-l border-[#ddd] pl-0.5 pr-px">189,18 mm x 108,86 mm</span>
      </footer>
    </div>
  );
}
